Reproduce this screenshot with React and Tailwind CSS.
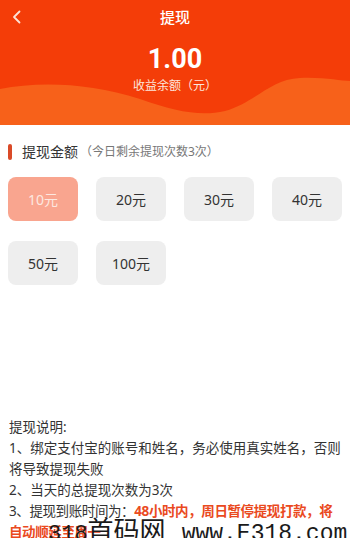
import React, { useState } from 'react';

const amounts = [10, 20, 30, 40, 50, 100];

const App = () => {
  const [picked, setPicked] = useState(10);

  return (
    <div
      className="relative w-[350px] h-[538px] overflow-hidden bg-white"
      style={{ fontFamily: '"Noto Sans", "Noto Sans CJK SC", sans-serif' }}
    >
      {/* header */}
      <div className="relative h-[125px] bg-[#f43d08] overflow-hidden">
        <svg className="absolute left-0 bottom-0" width="350" height="50" viewBox="0 0 350 50" preserveAspectRatio="none">
          <path d="M0 14 C40 6 90 8 140 24 C175 36 200 42 225 36 C255 28 270 4 300 3 C325 2 340 6 350 6 L350 50 L0 50 Z" fill="#f7611a" />
        </svg>
        <div className="relative flex items-center justify-center h-[34px]">
          <svg className="absolute left-[11px] top-[10px]" width="12" height="14" viewBox="0 0 12 14">
            <path d="M8.5 1.5 L3 7 L8.5 12.5" fill="none" stroke="#fde3d6" strokeWidth="1.8" strokeLinecap="round" strokeLinejoin="round" />
          </svg>
          <span className="text-white text-[15px] font-medium">提现</span>
        </div>
        <div className="relative flex flex-col items-center mt-[9px]">
          <span className="text-white text-[27px] font-bold leading-[32px]" style={{ fontFamily: 'Roboto, sans-serif' }}>1.00</span>
          <span className="text-[#fde6dc] text-[12px] leading-[16px] mt-[3px]">收益余额（元）</span>
        </div>
      </div>

      {/* amount section */}
      <div className="flex items-center mt-[17px] pl-[8px]">
        <div className="w-[4px] h-[16px] rounded-full bg-[#da4a28]" />
        <span className="ml-[10px] text-[14px] text-[#333] leading-[20px]">提现金额</span>
        <span className="ml-[2px] text-[12px] text-[#777] leading-[20px]">（今日剩余提现次数3次）</span>
      </div>

      <div className="grid grid-cols-4 gap-x-[18px] gap-y-[20px] px-[8px] mt-[15px]">
        {amounts.map((a) => (
          <button
            key={a}
            onClick={() => setPicked(a)}
            className={`h-[44px] rounded-[8px] text-[14px] ${
              picked === a ? 'bg-[#f9a58f] text-[#fde8e0]' : 'bg-[#eeeeee] text-[#333]'
            }`}
          >
            {a}元
          </button>
        ))}
      </div>

      {/* notes */}
      <div className="px-[9px] mt-[132px] text-[13.5px] leading-[21px] text-[#333] whitespace-nowrap">
        <p>提现说明:</p>
        <p>1、绑定支付宝的账号和姓名，务必使用真实姓名，否则</p>
        <p>将导致提现失败</p>
        <p>2、当天的总提现次数为3次</p>
        <p className="tracking-[-0.4px]">
          3、提现到账时间为：<span className="text-[#ea4a1e] font-bold">48小时内，周日暂停提现打款，将</span>
        </p>
        <p className="text-[#ea4a1e] font-bold tracking-[-0.4px]">自动顺延至周一</p>
      </div>

      {/* watermark */}
      <div className="absolute left-[48px] top-[513px] flex items-baseline leading-[32px] text-[#1a1a1a] whitespace-nowrap">
        <span className="text-[22px]" style={{ fontFamily: '"Liberation Mono", monospace' }}>318</span>
        <span className="text-[26px]" style={{ fontFamily: '"Noto Sans CJK SC", serif' }}>首码网</span>
        <span className="text-[23px] ml-[16px]" style={{ fontFamily: '"Liberation Mono", monospace' }}>www.E318.com</span>
      </div>
    </div>
  );
};

export default App;
